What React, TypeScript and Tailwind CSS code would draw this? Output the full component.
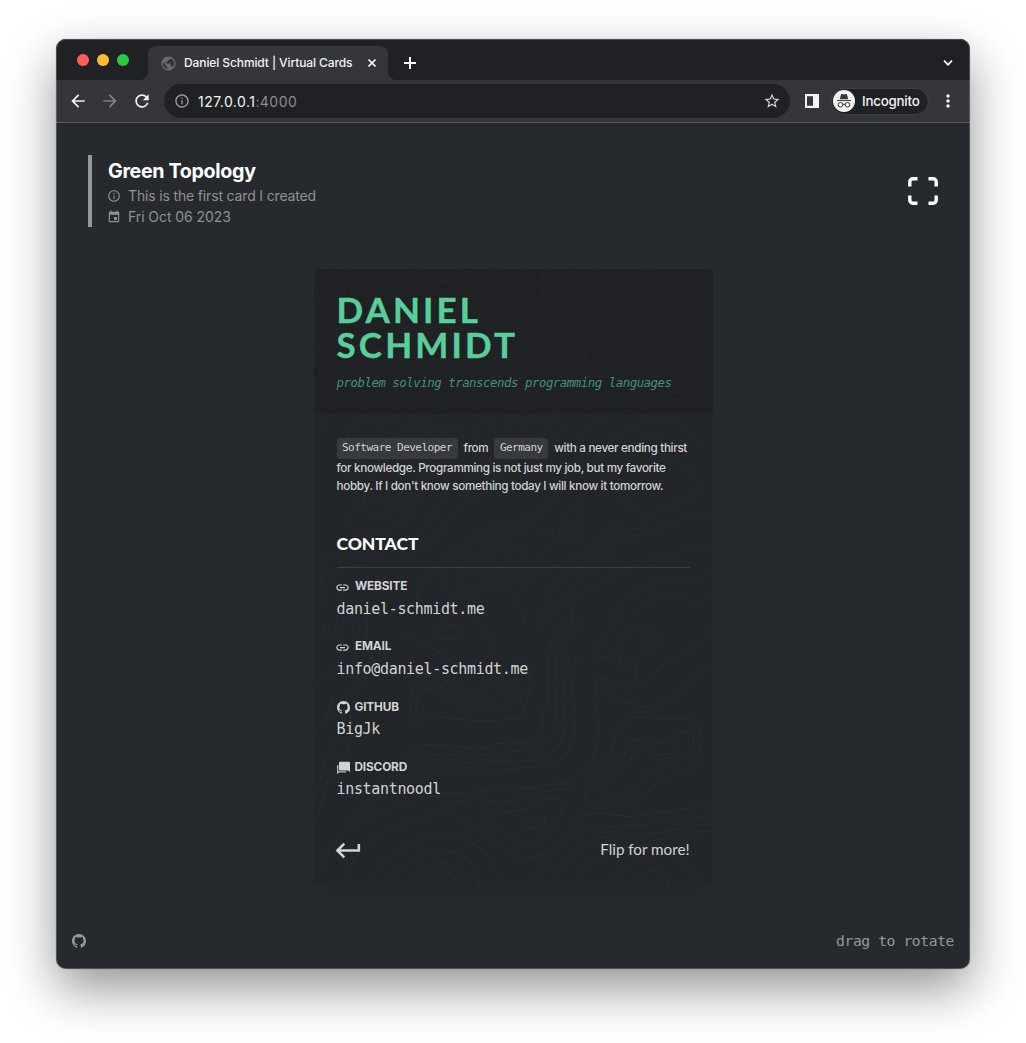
import type { ReactNode } from "react";
import {
  MdArrowBack,
  MdArrowForward,
  MdEvent,
  MdInfoOutline,
  MdKeyboardReturn,
  MdLink,
  MdMoreVert,
  MdOutlineStarBorder,
  MdPublic,
  MdRefresh,
} from "react-icons/md";
import { BsGithub } from "react-icons/bs";

const MONO = "font-['DejaVu_Sans_Mono',monospace]";

// Contour lines of the lower half of the card; the tile repeats vertically.
const tile = [
  "M330 290 C335 250 325 225 345 200 C370 170 400 185 430 205 C480 240 540 245 600 225 C640 205 650 170 640 140 C630 100 680 110 685 150 C690 200 690 260 655 295 C600 305 530 302 480 298 C420 285 370 300 330 305 Z",
  "M345 285 C355 240 350 225 385 205 C420 225 470 265 530 270 C600 270 650 250 665 210",
  "M300 60 C310 40 350 60 400 85 C440 110 480 160 530 140 C580 110 580 60 555 30 C540 10 530 0 525 -20",
  "M410 25 C430 0 480 15 478 40 C470 65 430 60 412 45 Z",
  "M250 60 C250 120 270 160 300 180 C350 150 400 160 450 190 C500 215 560 210 600 190",
  "M260 440 C300 440 310 420 345 390 C380 360 420 380 480 380 C550 395 560 380 590 370 C650 375 700 370 725 340 C740 310 715 300 735 260 C760 210 730 130 755 70 C770 30 800 10 830 -10",
  "M240 470 C290 460 330 420 370 405 C450 395 540 415 640 395 C720 390 765 360 765 310 C770 240 755 150 780 90 C800 50 830 30 850 0",
  "M180 560 C230 520 300 480 360 440 C470 420 600 430 700 420 C780 400 800 350 795 300 C790 220 790 150 810 110",
  "M140 610 C200 540 320 490 400 465 C540 450 680 450 760 430 C820 400 830 350 825 290 C815 220 815 160 830 120",
  "M60 740 C110 640 110 660 180 600 C300 560 340 530 460 520 C600 510 740 505 800 485 C870 460 900 390 895 300 C880 230 885 190 900 170 C940 180 930 200 990 205",
  "M890 485 C900 460 960 435 975 400 C1000 350 1010 350 1040 370 C1090 385 1120 340 1155 335 C1185 325 1190 370 1165 400 C1130 435 1060 440 1030 475 C1000 525 960 530 925 520 C900 510 885 505 890 485 Z",
  "M915 485 C940 450 990 440 1000 400 C1010 370 1020 380 1030 390 M1050 405 C1080 410 1110 400 1140 395 C1130 420 1100 410 1080 420",
  "M855 510 C870 450 930 420 940 370 C950 300 970 300 1020 290 C1080 300 1140 290 1180 300 C1220 330 1200 390 1190 430 C1160 460 1100 465 1060 500 C1010 560 950 570 890 550 C860 540 850 530 855 510",
  "M545 590 C580 575 650 580 690 560 C730 530 760 530 780 540 C800 560 770 620 740 650 C710 675 680 685 655 675 C630 640 580 620 550 600 Z",
  "M670 610 C675 590 710 600 735 590 C735 620 700 635 675 620 Z",
  "M460 570 C455 600 530 620 570 650 C630 700 650 720 690 715 C760 700 800 650 830 600 C870 560 940 590 1000 590 C1100 570 1190 570 1240 545",
  "M690 800 C740 720 800 650 860 620 C970 625 1080 610 1240 585",
  "M740 800 C800 710 840 670 910 650 C1050 660 1120 620 1240 610",
  "M820 800 C850 720 940 680 1020 680 C1100 650 1170 640 1240 630",
  "M910 800 C960 740 1020 710 1100 700 C1150 710 1170 760 1210 800",
  "M980 800 C1010 760 1060 740 1090 760 C1110 775 1105 790 1105 800",
  "M300 800 C350 770 390 720 440 730 C490 740 500 780 500 800",
  "M350 800 C380 780 400 755 440 755 C465 765 470 785 475 800",
  "M250 800 C300 740 360 690 450 695 C530 710 540 770 540 800",
  "M200 800 C250 700 350 640 470 650 C550 670 590 730 600 800",
  "M120 800 C170 710 160 700 230 650 C290 600 400 600 440 560 C480 530 550 540 620 545 C680 535 740 500 810 510",
  "M40 600 C90 540 60 500 100 450 C160 400 160 330 150 270 C170 210 210 180 220 110 C190 60 210 20 200 -20",
  "M40 530 C80 460 60 420 110 360 C140 290 120 240 170 180 C180 120 150 60 160 0",
  "M40 350 C80 310 90 270 100 230 M40 180 C70 190 80 160 110 140 C130 100 120 50 130 0",
  "M70 10 C75 35 85 60 95 55 C105 45 105 20 110 0",
  "M890 90 C910 50 930 20 960 0 M890 90 C880 120 920 120 960 100 C970 125 940 150 980 145 C1000 100 1010 140 1005 165 C1010 200 1040 190 1060 170 C1080 130 1110 120 1140 110 C1180 80 1230 60 1240 20",
  "M1020 50 C1030 35 1050 45 1047 65 C1035 75 1020 65 1020 50 M960 70 C980 30 1020 15 1060 30 C1090 50 1060 100 1030 110",
  "M900 170 C920 230 970 250 1000 250 C1050 280 1110 240 1140 220 C1170 170 1200 150 1240 145",
];

// Contour lines behind the introduction and the contact heading.
const middle = [
  "M145 310 C130 270 200 270 160 200 C120 130 110 90 150 40 C190 -20 250 -10 330 20 C430 30 400 110 390 160 C370 220 340 280 310 310 C260 345 160 340 145 310 Z",
  "M185 270 C210 240 180 190 170 140 C170 80 230 50 290 60 C370 90 370 160 340 210 C310 270 240 300 185 270 Z",
  "M220 240 C230 210 200 180 220 130 C260 90 330 110 320 160 C310 220 260 270 220 240 Z",
  "M350 540 C340 510 380 460 430 430 C480 370 520 340 590 320 C660 290 720 300 760 240 C780 200 740 150 760 90 C790 60 850 80 900 130 C950 200 960 260 1040 285 C1100 270 1150 245 1190 220 C1210 170 1160 140 1110 120 C1030 110 990 60 940 40",
  "M800 320 C810 310 830 330 815 345 C795 350 795 330 800 320 M780 340 C770 290 830 240 850 250 C840 300 860 350 820 370 C790 370 790 360 780 340",
  "M510 460 C500 440 550 430 560 410 C600 380 640 390 630 410 C620 440 540 480 510 460 Z",
  "M470 480 C460 450 500 420 530 400 C590 350 680 360 670 410 C650 460 580 490 510 500 C480 500 470 490 470 480 Z",
  "M430 500 C420 450 470 410 520 370 C610 320 720 310 760 340 C770 380 700 430 650 480 C580 520 450 540 430 500 Z",
  "M750 620 C745 570 790 550 820 500 C850 450 880 470 920 430 C930 390 960 350 990 350 C1050 350 1080 310 1140 300 C1180 280 1210 290 1240 280",
  "M720 620 C740 540 740 490 800 460 C860 440 900 410 930 370 C960 330 1000 330 1040 320",
  "M680 620 C650 540 640 510 690 480 C740 440 780 430 850 410 C910 370 920 320 960 310",
  "M820 620 C800 540 860 500 920 480 C990 430 1080 410 1240 370",
  "M940 600 C950 550 1010 510 1060 490 C1110 470 1170 500 1240 450",
  "M1000 600 C1020 550 1080 520 1120 530 C1180 530 1190 580 1240 510",
  "M60 560 C80 500 40 430 90 400 C160 400 270 410 340 370 C400 300 430 210 500 180 C590 140 580 50 640 0",
  "M130 620 C150 550 70 470 120 440 C210 440 310 430 380 380 C440 320 460 260 540 230 C630 180 600 70 690 10",
];

function Contours({ lines }: { lines: string[] }) {
  return (
    <>
      {lines.map((d) => (
        <path key={d} d={d} />
      ))}
    </>
  );
}

function Topography() {
  return (
    <svg
      className="pointer-events-none absolute inset-0"
      width="399"
      height="617"
      viewBox="0 0 399 617"
      fill="none"
    >
      <g strokeWidth="3.4">
        <g transform="translate(-14 351) scale(.3333)" stroke="#6fa39a" strokeOpacity="0.06">
          <Contours lines={tile} />
        </g>
        <g transform="translate(-14 -85.7) scale(.3333)" stroke="#2ab992" strokeOpacity="0.045">
          <Contours lines={tile} />
        </g>
        <g transform="translate(-14 151) scale(.3333)" stroke="#6fa39a" strokeOpacity="0.05">
          <Contours lines={middle} />
        </g>
      </g>
    </svg>
  );
}

function ChatStack() {
  return (
    <svg width="13" height="13" viewBox="0 0 13 13" fill="currentColor">
      <path d="M3 .8h9a1 1 0 0 1 1 1v9.2l-2-1.6H3a1 1 0 0 1-1-1V1.8a1 1 0 0 1 1-1Z" />
      <path d="M0 4h1.3v6.2H9v1.2H2.2L0 13Z" opacity=".85" />
    </svg>
  );
}

function Incognito() {
  return (
    <svg width="22" height="22" viewBox="0 0 22 22">
      <circle cx="11" cy="11" r="11" fill="#f1f3f4" />
      <path d="M6.8 9.2 8 4.6c.2-.6.6-.8 1.2-.6l1.8.5 1.8-.5c.6-.2 1 0 1.2.6l1.2 4.6Z" fill="#35363a" />
      <g fill="none" stroke="#35363a">
        <path d="M4 10.6h14" />
        <circle cx="7.5" cy="14.8" r="2.3" />
        <circle cx="14.5" cy="14.8" r="2.3" />
        <path d="M9.8 14.5q1.2-.7 2.4 0" />
      </g>
    </svg>
  );
}

function TabStrip() {
  return (
    <div className="flex h-[41px] shrink-0 items-end bg-[#202124]">
      <div className="flex h-[41px] w-[92px] items-center gap-2 pl-[21px]">
        <span className="size-3 rounded-full bg-[#ff5f57]" />
        <span className="size-3 rounded-full bg-[#febc2e]" />
        <span className="size-3 rounded-full bg-[#28c840]" />
      </div>
      <div className="relative flex h-[34px] w-[240px] items-center rounded-t-lg bg-[#35363a] pl-3 text-[#f1f3f4]">
        <svg className="absolute bottom-0 -left-2" width="8" height="8" viewBox="0 0 8 8" fill="#35363a">
          <path d="M8 0v8H0a8 8 0 0 0 8-8Z" />
        </svg>
        <svg className="absolute -right-2 bottom-0" width="8" height="8" viewBox="0 0 8 8" fill="#35363a">
          <path d="M0 0v8h8a8 8 0 0 1-8-8Z" />
        </svg>
        <MdPublic className="size-[17px] text-[#696b6f]" />
        <span className="ml-[7px] w-[184px] text-[12px] font-[450] tracking-[-0.1px] whitespace-nowrap">
          Daniel Schmidt | Virtual Cards
        </span>
        <svg width="8" height="8" viewBox="0 0 8 8" stroke="currentColor" strokeWidth="1.6">
          <path d="m.5.5 7 7M7.500.5l-7 7" />
        </svg>
      </div>
      <svg className="mb-[11px] ml-4" width="12" height="12" viewBox="0 0 12 12" stroke="#fff" strokeWidth="2">
        <path d="M6 0v12M0 6h12" />
      </svg>
      <svg className="mr-[17px] mb-[14px] ml-auto" width="10" height="6" viewBox="0 0 10 6" fill="none" stroke="#fff" strokeWidth="1.7">
        <path d="M1 .7 5 4.7 9 .7" />
      </svg>
    </div>
  );
}

function Toolbar() {
  return (
    <div className="flex h-[43px] shrink-0 items-center border-b border-[#5b5d60] bg-[#35363a] pl-[12px] text-[#f1f3f4]">
      <MdArrowBack className="size-[20px]" />
      <MdArrowForward className="ml-[12px] size-[20px] text-[#808185]" />
      <MdRefresh className="ml-[12px] size-[20px]" />
      <div className="ml-[12px] flex h-[34px] w-[626px] items-center rounded-full bg-[#202124] pr-[9px] pl-[10px]">
        <MdInfoOutline className="size-4 text-[#9aa0a6]" />
        <span className="ml-2 text-[14px] tracking-[0.46px]">
          127.0.0.1<span className="text-[#8b8d91]">:4000</span>
        </span>
        <MdOutlineStarBorder className="ml-auto size-[18px] text-[#d0d2d5]" />
      </div>
      <svg className="ml-[15px]" width="14" height="14" viewBox="0 0 14 14">
        <path d="M0 0h14v14H0Z" fill="#f1f3f4" />
        <path d="M2 2.2h6v9.6H2Z" fill="#35363a" />
      </svg>
      <div className="ml-[12px] flex h-[27px] w-[98px] items-center rounded-full border border-[#404145] bg-[#202124] pl-[1px]">
        <Incognito />
        <span className="mt-[1px] ml-[7px] text-[13.3px] font-[450] tracking-[-0.2px]">Incognito</span>
      </div>
      <MdMoreVert className="ml-[9px] size-5" />
    </div>
  );
}

function Intro() {
  return (
    <div className="flex items-start justify-between">
      <div className="h-[72px] border-l-4 border-[#97989a] pl-4 text-[#8f9194]">
        <h1 className="h-[30px] text-[19.7px] leading-[32px] font-bold tracking-[-0.35px] text-white">
          Green Topology
        </h1>
        <p className="flex h-[21px] items-center text-[14px] tracking-[-0.16px] whitespace-nowrap">
          <MdInfoOutline className="-ml-[1px] mr-[7px] size-[14px]" />
          This is the first card I created
        </p>
        <p className="flex h-[21px] items-center text-[14px] tracking-[-0.08px] whitespace-nowrap">
          <MdEvent className="-ml-[1px] mr-[7px] size-[14px]" />
          Fri Oct 06 2023
        </p>
      </div>
      <svg className="mt-[22px]" width="30" height="28" viewBox="0 0 30 28" fill="none" stroke="#fff" strokeWidth="3.4">
        <path d="M9.5 1.8H4.8a3 3 0 0 0-3 3v4.7M20.5 1.8h4.7a3 3 0 0 1 3 3v4.7M28.2 18.5v4.7a3 3 0 0 1-3 3h-4.7M9.5 26.2H4.8a3 3 0 0 1-3-3v-4.7" />
      </svg>
    </div>
  );
}

function Tag({ children }: { children: string }) {
  return (
    <code
      className={`${MONO} inline-block h-[21px] rounded-[3px] bg-[#37393d] px-[5.5px] text-[11px] leading-[20px] tracking-[-0.51px]`}
    >
      {children}
    </code>
  );
}

function Contact({ icon, label, value }: { icon: ReactNode; label: string; value: string }) {
  return (
    <li className="h-[60.2px] text-[#d2d3d4]">
      <div className="flex h-[21px] items-center gap-[5px] text-[11.8px] font-bold tracking-[-0.15px]">
        {icon}
        <span>{label}</span>
      </div>
      <div className={`${MONO} h-[24px] text-[15px] leading-[22px] tracking-[-0.33px]`}>{value}</div>
    </li>
  );
}

function Card() {
  return (
    <article className="relative mx-auto mt-[42px] flex h-[617px] w-[399px] flex-col overflow-hidden rounded-[6px] bg-[#222529] shadow-[0_24px_30px_-14px_rgba(0,0,0,0.08)]">
      <header className="h-[145px] bg-[#202124] pt-[23px] pl-[23px]">
        <h2 className="font-['Lato',sans-serif] text-[35px] leading-[35px] font-bold tracking-[3.15px] text-[#58cf9b] [-webkit-text-stroke:0.4px_#58cf9b]">
          DANIEL
          <br />
          SCHMIDT
        </h2>
        <p className={`${MONO} mt-[11px] text-[12.4px] leading-[20px] tracking-[-0.48px] whitespace-nowrap text-[#419370] italic`}>
          problem solving transcends programming languages
        </p>
      </header>
      <div className="flex flex-1 flex-col px-[23px] pt-[23px] text-[#d2d3d4]">
        <div className="text-[11.7px] leading-[18px] font-[450] tracking-[-0.33px] whitespace-nowrap">
          <p className="flex h-[22px] items-center">
            <Tag>Software Developer</Tag>
            <span className="mx-[6px]">from</span>
            <Tag>Germany</Tag>
            <span className="ml-[6px]">with a never ending thirst</span>
          </p>
          <p>for knowledge. Programming is not just my job, but my favorite</p>
          <p>hobby. If I don't know something today I will know it tomorrow.</p>
        </div>
        <h3 className="mt-[37px] h-[35.5px] border-b-[1.5px] border-[#3a3d40] font-['Lato',sans-serif] text-[17.5px] leading-[24px] font-black tracking-[-0.05px] text-white">
          CONTACT
        </h3>
        <ul className="mt-[9px]">
          <Contact icon={<MdLink className="-ml-[1.5px] size-[15px]" />} label="WEBSITE" value="daniel-schmidt.me" />
          <Contact icon={<MdLink className="-ml-[1.5px] size-[15px]" />} label="EMAIL" value="info@daniel-schmidt.me" />
          <Contact icon={<BsGithub className="size-[13px]" />} label="GITHUB" value="BigJk" />
          <Contact icon={<ChatStack />} label="DISCORD" value="instantnoodl" />
        </ul>
        <footer className="mt-[20px] flex h-[24px] items-center justify-between">
          <MdKeyboardReturn className="mt-[3px] -ml-[4px] size-[31px]" />
          <span className="font-['Lato',sans-serif] text-[15.2px]">Flip for more!</span>
        </footer>
      </div>
      <Topography />
    </article>
  );
}

export default function App() {
  return (
    <div className="h-[1043px] w-[1026px] overflow-hidden bg-white pt-[39px] pl-[56px] font-['Inter',sans-serif]">
      <div className="h-[930px] w-[914px] rounded-[10px] shadow-[0_20px_50px_rgba(0,0,0,0.42),0_0_1px_rgba(0,0,0,0.5)]">
        <div className="relative flex h-full flex-col overflow-hidden rounded-[10px] bg-[#26292e] after:pointer-events-none after:absolute after:inset-0 after:rounded-[10px] after:border after:border-white/20">
          <TabStrip />
          <Toolbar />
          <main className="flex flex-1 flex-col px-8 pt-8">
            <Intro />
            <Card />
            <div className="-mx-4 mt-[43px] flex h-[24px] items-center justify-between text-[#97989a]">
              <BsGithub className="size-[14px]" />
              <span className={`${MONO} text-[14.6px] tracking-[-0.36px]`}>drag to rotate</span>
            </div>
          </main>
        </div>
      </div>
    </div>
  );
}
